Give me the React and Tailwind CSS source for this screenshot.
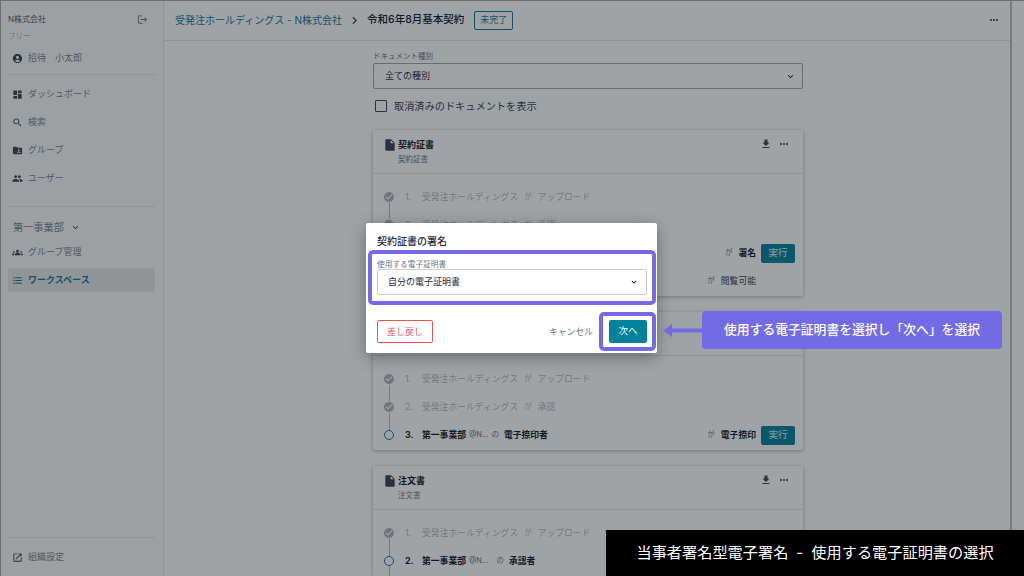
import React from 'react';
import {
  MdAccountCircle, MdDashboard, MdSearch, MdFolderShared, MdPeople, MdGroups, MdFormatListBulleted,
  MdOpenInNew, MdLogout, MdInsertDriveFile, MdFileDownload, MdMoreHoriz, MdExpandMore, MdCheckCircle,
  MdChevronRight,
} from 'react-icons/md';

const font = { fontFamily: 'Inter, "Noto Sans CJK JP", sans-serif' };

const NavRow = ({ icon: Icon, label, active }) => (
  <div className={`flex items-center h-[24px] mx-2 px-1 gap-[5px] rounded-[3px] text-[9px] ${active ? 'bg-[#e8e8e8] text-[#0b7a92] font-bold' : 'text-[#7c828d]'}`}>
    <Icon className={`w-[11px] h-[11px] ${active ? 'text-[#0b7a92]' : 'text-[#374151]'}`} />
    <span>{label}</span>
  </div>
);

const Sidebar = () => (
  <aside className="w-[164px] shrink-0 h-full flex flex-col border-r border-[#e5e7eb] bg-[#fbfbfb]">
    <div className="flex items-center justify-between pl-2 pr-[15px] pt-[13px] text-[8px] text-[#4b5563]">
      <span>N株式会社</span>
      <MdLogout className="w-[11px] h-[11px] text-[#6b7280]" />
    </div>
    <div className="pl-2 mt-[6px] text-[7.5px] leading-[12px] text-[#b0b4ba]">フリー</div>
    <div className="mt-[3px]"><NavRow icon={MdAccountCircle} label="招待　小太郎" /></div>
    <div className="mx-2 mt-[4px] border-t border-[#e5e7eb]" />
    <div className="mt-[7px] flex flex-col gap-1">
      <NavRow icon={MdDashboard} label="ダッシュボード" />
      <NavRow icon={MdSearch} label="検索" />
      <NavRow icon={MdFolderShared} label="グループ" />
      <NavRow icon={MdPeople} label="ユーザー" />
    </div>
    <div className="mx-2 mt-[16px] border-t border-[#e5e7eb]" />
    <div className="flex items-center gap-[6px] pl-[13px] mt-[13px] text-[10.2px] leading-[14px] text-[#7c828d]">
      第一事業部 <MdExpandMore className="w-[11px] h-[11px] text-[#374151]" />
    </div>
    <div className="mt-[6px] flex flex-col gap-1">
      <NavRow icon={MdGroups} label="グループ管理" />
      <NavRow icon={MdFormatListBulleted} label="ワークスペース" active />
    </div>
    <div className="mx-2 mt-auto border-t border-[#e5e7eb]" />
    <div className="mt-[7px] mb-[7px]"><NavRow icon={MdOpenInNew} label="組織設定" /></div>
  </aside>
);

// 行の左側がダイアログに隠れるものは who を渡さない
const Step = ({ n, who, org, of, ofWide, verb, action, done, current, plain, last, spacer }) => (
  <div className="relative flex items-center h-[28px] pl-[11px] pr-[8px] text-[8.8px]">
    {!last && <div className="absolute left-[15.5px] top-[14px] h-[28px] w-px bg-[#b4b8be]" />}
    {done ? (
      <MdCheckCircle className="relative w-[12px] h-[12px] -ml-[1px] -mr-[1px] text-[#b0b4ba] bg-white rounded-full" />
    ) : (
      <span className="relative w-[10px] h-[10px] rounded-full border border-[#2b6cb0] bg-white" />
    )}
    {who && (
      <>
        <span className={`ml-[11px] w-[17px] ${current ? 'font-bold text-[#111827]' : 'text-[#b4b8be]'}`}>{n}.</span>
        <span className={current ? 'font-bold text-[#111827]' : 'text-[#b4b8be]'}>{who}</span>
      </>
    )}
    {org && <span className="ml-[3px] text-[#6b7280] text-[7.5px]">{org}</span>}
    {of && <span className={`${ofWide ? 'ml-[8px]' : 'ml-[3px]'} text-[#6b7280] text-[7.5px]`}>の</span>}
    {of && <span className="ml-[5px] font-bold text-[#111827]">{of}</span>}
    {!current && !plain && (
      <>
        <span className="ml-[6px] text-[7.5px] text-[#b4b8be]">が</span>
        <span className="ml-[6px] text-[#b4b8be]">{verb}</span>
      </>
    )}
    {(current || plain) && verb && (
      <div className="ml-auto flex items-center">
        <span className="text-[7.5px] text-[#6b7280]">が</span>
        <span className={`ml-[6px] ${plain ? 'text-[#374151]' : 'font-bold text-[#111827]'}`}>{verb}</span>
        {action && (
          <span className="ml-[5px] w-[34px] h-[19px] flex items-center justify-center rounded-[2px] bg-[#00829b] text-white/90 text-[9.5px] font-normal">実行</span>
        )}
        {spacer && <span className="ml-[5px] w-[34px] h-[19px]" />}
      </div>
    )}
  </div>
);

const Card = ({ title, children }) => (
  <div className="w-[430px] shrink-0 rounded-[2px] bg-white shadow-[0_1px_4px_rgba(0,0,0,0.3)]">
    <div className="h-[44px] flex items-start justify-between pl-[10px] pr-[13px] pt-[8px] border-b border-[#e5e7eb]">
      {title && (
        <>
          <div>
            <div className="flex items-center gap-px text-[9px] font-bold text-[#111827]">
              <MdInsertDriveFile className="w-[14px] h-[14px] text-[#374151]" />
              {title}
            </div>
            <div className="ml-[15px] mt-[2px] text-[7.5px] text-[#6b7280]">{title}</div>
          </div>
          <div className="flex items-center gap-[6px] text-[#374151]">
            <MdFileDownload className="w-[12px] h-[12px]" />
            <MdMoreHoriz className="w-[12px] h-[12px]" />
          </div>
        </>
      )}
    </div>
    <div className="pt-[9px] pb-[1px]">{children}</div>
  </div>
);

const Content = () => (
  <div className="w-[430px] ml-[209px] pt-[10px] flex flex-col">
    <div className="text-[7.5px] leading-[12px] text-[#6b7280]">ドキュメント種別</div>
    <div className="h-[26px] flex items-center justify-between pl-[11px] pr-[6px] rounded-[2px] border border-[#9ca3af] text-[9px] text-[#1f2937]">
      全ての種別
      <MdExpandMore className="w-[11px] h-[11px] text-[#111827]" />
    </div>
    <div className="mt-[9px] flex items-center gap-[7px] pl-[2px] text-[10.2px] leading-[16px] text-[#374151]">
      <span className="w-[12px] h-[12px] rounded-[1px] border border-[#374151]" />
      取消済みのドキュメントを表示
    </div>
    <div className="mt-[16px] flex flex-col gap-[16px]">
      <Card title="契約証書">
        <Step n={1} who="受発注ホールディングス" verb="アップロード" done />
        <Step n={2} who="受発注ホールディングス" verb="承認" done />
        <Step verb="署名" current action />
        <Step verb="閲覧可能" plain spacer last />
      </Card>
      <Card>
        <Step n={1} who="受発注ホールディングス" verb="アップロード" done />
        <Step n={2} who="受発注ホールディングス" verb="承認" done />
        <Step n={3} who="第一事業部" org="@N..." of="電子捺印者" verb="電子捺印" current action last />
      </Card>
      <Card title="注文書">
        <Step n={1} who="受発注ホールディングス" verb="アップロード" done />
        <Step n={2} who="第一事業部" org="@N..." of="承認者" ofWide current />
      </Card>
    </div>
  </div>
);

const Dialog = () => (
  <div className="absolute left-[366px] top-[223px] w-[291px] h-[130px] bg-white rounded-[2px] shadow-[0_4px_16px_rgba(0,0,0,0.35)] pl-[11px] pr-[10px] pt-[11px]">
    <div className="text-[10px] leading-[14px] font-medium text-[#1f2937]">契約証書の署名</div>
    <div className="mt-[12px] text-[7.7px] leading-[9px] text-[#6b7280]">使用する電子証明書</div>
    <div className="h-[26px] flex items-center justify-between pl-[10px] pr-[7px] rounded-[2px] border border-[#c9cbd0] text-[9px] text-[#1f2937]">
      自分の電子証明書
      <MdExpandMore className="w-[10px] h-[10px] text-[#111827]" />
    </div>
    <div className="mt-[25px] flex items-center">
      <span className="w-[56px] h-[23px] flex items-center justify-center rounded-[2px] border border-[#e25555] text-[9px] text-[#e25555]">差し戻し</span>
      <span className="ml-auto text-[8.8px] text-[#6b7280]">キャンセル</span>
      <span className="ml-[16px] w-[38px] h-[23px] flex items-center justify-center rounded-[2px] bg-[#00829b] text-white text-[9.5px]">次へ</span>
    </div>
  </div>
);

export default function App() {
  return (
    <div style={font} className="relative w-[1024px] h-[576px] overflow-hidden bg-white">
      <div className="flex h-full">
        <Sidebar />
        <div className="flex-1 h-full flex flex-col min-w-0">
          <header className="h-[41px] shrink-0 flex items-center pl-[11px] pr-[10px] border-b border-[#e5e7eb]">
            <span className="text-[10px] text-[#0b7a92]">受発注ホールディングス - N株式会社</span>
            <MdChevronRight className="mx-[5px] w-[15px] h-[15px] text-[#374151]" />
            <span className="text-[10.5px] font-medium text-[#111827]">令和6年8月基本契約</span>
            <span className="ml-[10px] h-[19px] w-[39px] flex items-center justify-center rounded-[2px] border border-[#0b7a92] text-[9px] text-[#0b7a92]">未完了</span>
            <MdMoreHoriz className="ml-auto w-[12px] h-[12px] text-[#374151]" />
          </header>
          <main className="flex-1 min-h-0 overflow-hidden">
            <Content />
          </main>
        </div>
        <div className="w-[14px] shrink-0 border-l-2 border-[#b9bcc0]" />
      </div>

      {/* 暗幕 */}
      <div className="absolute inset-0 bg-[#111820]/40" />
      <div className="absolute inset-x-0 top-0 h-px bg-[#6b6f75]" />
      <div className="absolute inset-y-0 left-0 w-px bg-[#6b6f75]" />

      <Dialog />

      {/* 注釈 */}
      <div className="absolute left-[368px] top-[250px] w-[288px] h-[55px] rounded-[5px] border-[4px] border-[#756ae5]" />
      <div className="absolute left-[599px] top-[312px] w-[57px] h-[39px] rounded-[5px] border-[4px] border-[#756ae5]" />
      <svg className="absolute left-[662px] top-[324px]" width="42" height="13" viewBox="0 0 42 13">
        <path d="M1 6.5 L10 0 V4.5 H42 V8.5 H10 V13 Z" fill="#756ae5" />
      </svg>
      <div className="absolute left-[702px] top-[311px] w-[300px] h-[38px] flex items-center justify-center rounded-[4px] bg-[#756ae5] text-[12.8px] font-medium text-white">
        使用する電子証明書を選択し「次へ」を選択
      </div>
      <div className="absolute left-[606px] top-[530px] w-[418px] h-[46px] flex items-center justify-center bg-black text-[15.2px] text-white">
        <span>当事者署名型電子署名<span className="mx-[8px]">-</span>使用する電子証明書の選択</span>
      </div>
    </div>
  );
}
